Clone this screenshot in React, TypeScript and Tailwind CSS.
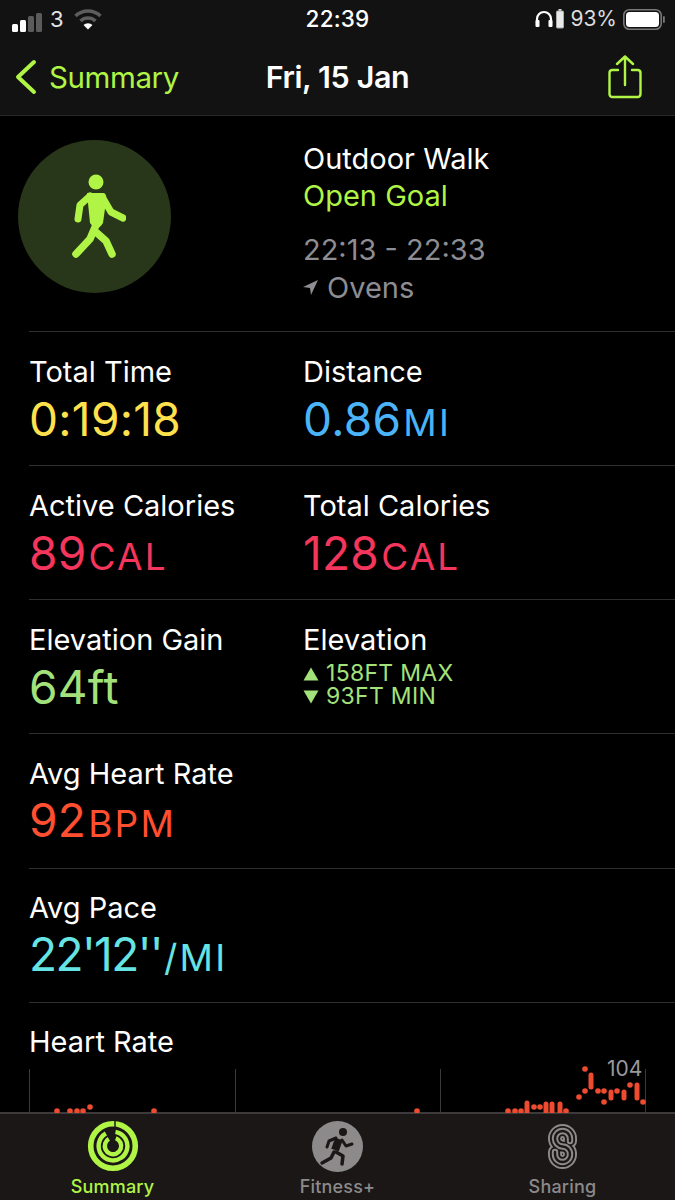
const font = { fontFamily: "Inter, 'Liberation Sans', sans-serif" };

function Cell({ label, value, unit, color, className = "", valueClass = "mt-[1px] tracking-[0.3px]" }: { label: string; value: string; unit?: string; color: string; className?: string; valueClass?: string }) {
  return (
    <div className={`flex flex-col ${className}`}>
      <div className="text-[29px] leading-[34px] text-white">{label}</div>
      <div className={`text-[46px] leading-[58px] whitespace-nowrap ${valueClass} ${color}`}>
        {value}
        {unit && <span className="text-[37px] tracking-[2.2px] ml-[2px]">{unit}</span>}
      </div>
    </div>
  );
}

function Row({ children, tall = false, top = "pt-[23px]" }: { children: React.ReactNode; tall?: boolean; top?: string }) {
  return <div className={`ml-[29px] border-b border-[#2e2e30] flex ${top} ${tall ? "h-[135px]" : "h-[134px]"}`}>{children}</div>;
}

function Signal() {
  return (
    <svg width="42" height="28" viewBox="0 0 42 28">
      <rect x="12" y="19" width="6" height="8" rx="1.5" fill="#fff" />
      <rect x="20" y="15" width="6" height="12" rx="1.5" fill="#fff" />
      <rect x="28" y="11" width="6" height="16" rx="1.5" fill="#5b5b5b" />
      <rect x="36" y="8" width="6" height="19" rx="1.5" fill="#5b5b5b" />
    </svg>
  );
}

function Wifi() {
  return (
    <svg width="28" height="22" viewBox="0 0 28 22" fill="none" stroke="#5d5d5d" strokeWidth="3.4">
      <path d="M1.5 8 A18 18 0 0 1 26.5 8" />
      <path d="M6.5 13 A11 11 0 0 1 21.5 13" />
      <path d="M14 21.5 L9.5 17 A6.5 6.5 0 0 1 18.5 17 Z" fill="#fff" stroke="none" />
    </svg>
  );
}

function Walker() {
  return (
    <svg width="56" height="86" viewBox="0 0 56 86" fill="none" stroke="#b0f545" strokeLinecap="round" strokeLinejoin="round">
      <circle cx="26" cy="9" r="7.5" fill="#b0f545" stroke="none" />
      <path d="M17 20 H33 Q36 20 36.5 25 L33 50 Q29 57 24 55 L20 50 L18 30 Z" fill="#b0f545" stroke="none" />
      <path d="M20 23 L10 32 L8 46" strokeWidth="7" />
      <path d="M34 27 L41 39 L53 45" strokeWidth="7" />
      <path d="M26 52 L20 66 L6 81" strokeWidth="7.5" />
      <path d="M27 60 L36 68 L42 81" strokeWidth="7.5" />
    </svg>
  );
}

function Rings() {
  return (
    <svg width="52" height="52" viewBox="0 0 52 52" fill="none" stroke="#b0f545">
      <circle cx="26" cy="26" r="22.3" strokeWidth="5.6" />
      <circle cx="26" cy="26" r="14.4" strokeWidth="4.4" strokeDasharray="80 11" transform="rotate(-80 26 26)" />
      <circle cx="26" cy="26" r="8.2" strokeWidth="4.4" strokeDasharray="44 7.5" transform="rotate(-70 26 26)" />
      <path d="M28 1 V9" stroke="#1b1717" strokeWidth="1.5" />
    </svg>
  );
}

function Runner() {
  return (
    <div className="w-[51px] h-[51px] rounded-full bg-[#8c8a8a] flex items-center justify-center">
      <svg width="38" height="40" viewBox="0 0 38 40" fill="none" stroke="#1b1717" strokeLinecap="round" strokeLinejoin="round">
        <circle cx="24" cy="6" r="4" fill="#1b1717" stroke="none" />
        <path d="M20 13 L16 24" strokeWidth="8" strokeLinecap="butt" />
        <path d="M17 12 L10 15 L8 21" strokeWidth="3" />
        <path d="M23 14 L27 20 L33 18" strokeWidth="3" />
        <path d="M15 26 L12 32 L3 37" strokeWidth="3.5" />
        <path d="M17 26 L24 30 L23 38" strokeWidth="3.5" />
      </svg>
    </div>
  );
}

function SharingIcon() {
  const d = "M22 17 V14.5 A7.5 7.5 0 0 0 14.5 7 A7.5 7.5 0 0 0 7 14.5 A8 8 0 0 0 14.5 22.5 A7.5 7.5 0 0 1 22 30.5 A7.5 7.5 0 0 1 14.5 38 A7.5 7.5 0 0 1 7 30.5 V28";
  return (
    <svg width="29" height="45" viewBox="0 0 29 45" fill="none" strokeLinecap="round" strokeLinejoin="round">
      <path d={d} stroke="#8c8a8a" strokeWidth="14" />
      <path d={d} stroke="#1b1717" strokeWidth="10.2" />
      <path d={d} stroke="#8c8a8a" strokeWidth="6.4" />
      <path d={d} stroke="#1b1717" strokeWidth="2.4" />
    </svg>
  );
}

const dots: [number, number][] = [
  [57, 42], [70, 42], [77, 42], [83, 42], [90, 38], [154, 42], [417, 42],
  [508, 42], [515, 42], [521, 42], [534, 38], [540, 38], [566, 42],
  [579, 28], [585, 22], [585, 0], [598, 22], [604, 22], [604, 33], [617, 22], [630, 16], [643, 33],
];
const bars: [number, number, number][] = [
  [527, 34, 44], [546, 35, 44], [552, 35, 44], [560, 35, 44],
  [591, 6, 18], [611, 23, 29], [624, 23, 29], [637, 16, 29],
];

function Chart() {
  return (
    <svg className="block ml-[29px] mt-[10px] overflow-visible" width="646" height="44" viewBox="0 0 646 44">
      {[0.5, 206.5, 411.5, 616.5].map((x) => (
        <line key={x} x1={x} y1="0" x2={x} y2="44" stroke="#3a3a3c" strokeWidth="1" />
      ))}
      {dots.map(([x, y], i) => (
        <circle key={i} cx={x - 29} cy={y} r="2.8" fill="#ee4b30" />
      ))}
      {bars.map(([x, a, b], i) => (
        <line key={i} x1={x - 29} y1={a} x2={x - 29} y2={b} stroke="#ee4b30" strokeWidth="5" strokeLinecap="round" />
      ))}
    </svg>
  );
}

function Tab({ icon, label, color }: { icon: React.ReactNode; label: string; color: string }) {
  return (
    <div className="flex flex-col items-center w-[225px]">
      <div className="h-[52px] flex items-center justify-center">{icon}</div>
      <div className={`text-[18px] leading-[22px] mt-[4px] font-medium tracking-[0.2px] ${color}`}>{label}</div>
    </div>
  );
}

export default function App() {
  return (
    <div className="relative w-[675px] h-[1200px] bg-black overflow-hidden flex flex-col text-white" style={font}>
      <header className="bg-[#121212] h-[116px] border-b border-[#2a2a2a] shrink-0">
        <div className="relative h-[38px] flex items-center justify-between pr-[10px]">
          <div className="flex items-center">
            <Signal />
            <span className="text-[22px] ml-[8px] text-[#e4e4e4]">3</span>
            <span className="ml-[10px]"><Wifi /></span>
          </div>
          <div className="absolute left-0 right-0 text-center text-[22.5px] font-medium tracking-[0.2px]">22:39</div>
          <div className="flex items-center">
            <svg width="18" height="18" viewBox="0 0 18 18" fill="none" stroke="#fff" strokeWidth="2.2">
              <path d="M2 15 V9 A7 7 0 0 1 16 9 V15" />
              <rect x="0.5" y="10" width="4" height="7" rx="1" fill="#fff" stroke="none" />
              <rect x="13.5" y="10" width="4" height="7" rx="1" fill="#fff" stroke="none" />
            </svg>
            <svg className="ml-[3px]" width="8" height="20" viewBox="0 0 8 20">
              <rect x="2.5" y="0" width="3" height="2" fill="#ccc" />
              <rect x="0.5" y="2" width="7" height="17" rx="1" fill="#e8e8e8" stroke="#aaa" />
            </svg>
            <span className="text-[21px] ml-[6px] text-[#dcdcdc]">93%</span>
            <svg className="ml-[6px]" width="42" height="21" viewBox="0 0 42 21">
              <rect x="0.8" y="0.8" width="37.4" height="19.4" rx="5.5" fill="none" stroke="#777" strokeWidth="1.6" />
              <rect x="3" y="3" width="33" height="15" rx="3.5" fill="#fff" />
              <rect x="40" y="7" width="1.8" height="7" rx="0.9" fill="#777" />
            </svg>
          </div>
        </div>
        <div className="relative h-[77px] flex items-center justify-between pl-[14px] pr-[33px]">
          <div className="flex items-center gap-[11px] text-[#b0f545]">
            <svg width="24" height="36" viewBox="0 0 24 36" fill="none" stroke="#b0f545" strokeWidth="4" strokeLinecap="round" strokeLinejoin="round">
              <path d="M20 3 L4 18 L20 33" />
            </svg>
            <span className="text-[29.5px] leading-[36px] tracking-[-0.4px]">Summary</span>
          </div>
          <div className="absolute left-0 right-0 text-center text-[30.5px] leading-[36px] font-semibold tracking-[-0.4px] pointer-events-none">Fri, 15 Jan</div>
          <svg width="34" height="44" viewBox="0 0 34 44" fill="none" stroke="#b0f545" strokeWidth="2.4" strokeLinecap="round" strokeLinejoin="round">
            <path d="M10 15 H4 A3 3 0 0 0 1.5 18 V39 A3 3 0 0 0 4 42 H30 A3 3 0 0 0 32.5 39 V18 A3 3 0 0 0 30 15 H24" />
            <path d="M17 30 V2 M9 9 L17 1.5 L25 9" />
          </svg>
        </div>
      </header>

      <main className="flex-1 min-h-0 overflow-hidden">
        <div className="ml-[29px] h-[216px] border-b border-[#2e2e30] flex">
          <div className="w-[275px] -ml-[11px] pt-[24px] shrink-0 mr-[10px]">
            <div className="w-[153px] h-[153px] rounded-full bg-[#28361a] flex items-center justify-center pl-[7px] pb-[2px]">
              <Walker />
            </div>
          </div>
          <div className="pt-[24px] text-[29px] leading-[37px]">
            <div>Outdoor Walk</div>
            <div className="text-[#b0f545]">Open Goal</div>
            <div className="text-[#8d8d93] mt-[17px]">22:13 - 22:33</div>
            <div className="text-[#8d8d93] flex items-center gap-[9px] mt-[1px]">
              <svg width="15" height="15" viewBox="0 0 15 15"><path d="M15 0 L0 7 L7 8 L8 15 Z" fill="#8d8d93" /></svg>
              Ovens
            </div>
          </div>
        </div>
        <Row>
          <Cell className="w-[274px]" label="Total Time" value="0:19:18" color="text-[#ffe14d]" />
          <Cell label="Distance" value="0.86" unit="MI" color="text-[#4bb4f8]" />
        </Row>
        <Row>
          <Cell className="w-[274px]" label="Active Calories" value="89" unit="CAL" color="text-[#f5365c]" />
          <Cell label="Total Calories" value="128" unit="CAL" color="text-[#f5365c]" />
        </Row>
        <Row>
          <Cell className="w-[274px]" label="Elevation Gain" value="64ft" color="text-[#a3e27a]" />
          <div className="flex flex-col">
            <div className="text-[29px] leading-[34px]">Elevation</div>
            <div className="text-[23px] leading-[23px] mt-[5px] text-[#a3e27a] tracking-[0.3px]">
              <div className="flex items-center gap-[7px]">
                <svg width="16" height="14" viewBox="0 0 16 14"><path d="M8 0.5 L15.5 13.5 H0.5 Z" fill="#a3e27a" /></svg>
                158FT MAX
              </div>
              <div className="flex items-center gap-[7px]">
                <svg width="16" height="14" viewBox="0 0 16 14"><path d="M8 13.5 L15.5 0.5 H0.5 Z" fill="#a3e27a" /></svg>
                93FT MIN
              </div>
            </div>
          </div>
        </Row>
        <Row tall>
          <Cell label="Avg Heart Rate" value="92" unit="BPM" color="text-[#ff4f30]" valueClass="tracking-[0.3px]" />
        </Row>
        <Row top="pt-[22px]">
          <Cell label="Avg Pace" value={"22'12''"} unit="/MI" color="text-[#66e4e4]" valueClass="tracking-[-1.6px]" />
        </Row>
        <div className="relative">
          <div className="ml-[29px] pt-[22px] text-[29px] leading-[34px]">Heart Rate</div>
          <Chart />
          <div className="absolute left-[607px] top-[53px] text-[21px] leading-[26px] text-[#98989d]">104</div>
        </div>
      </main>

      <nav className="h-[88px] shrink-0 bg-[#1b1717] border-t-2 border-[#3c3a3a] flex pt-[6px] -mt-[1px]">
        <Tab icon={<Rings />} label="Summary" color="text-[#b0f545]" />
        <Tab icon={<Runner />} label="Fitness+" color="text-[#8c8a8a]" />
        <Tab icon={<SharingIcon />} label="Sharing" color="text-[#8c8a8a]" />
      </nav>
    </div>
  );
}
